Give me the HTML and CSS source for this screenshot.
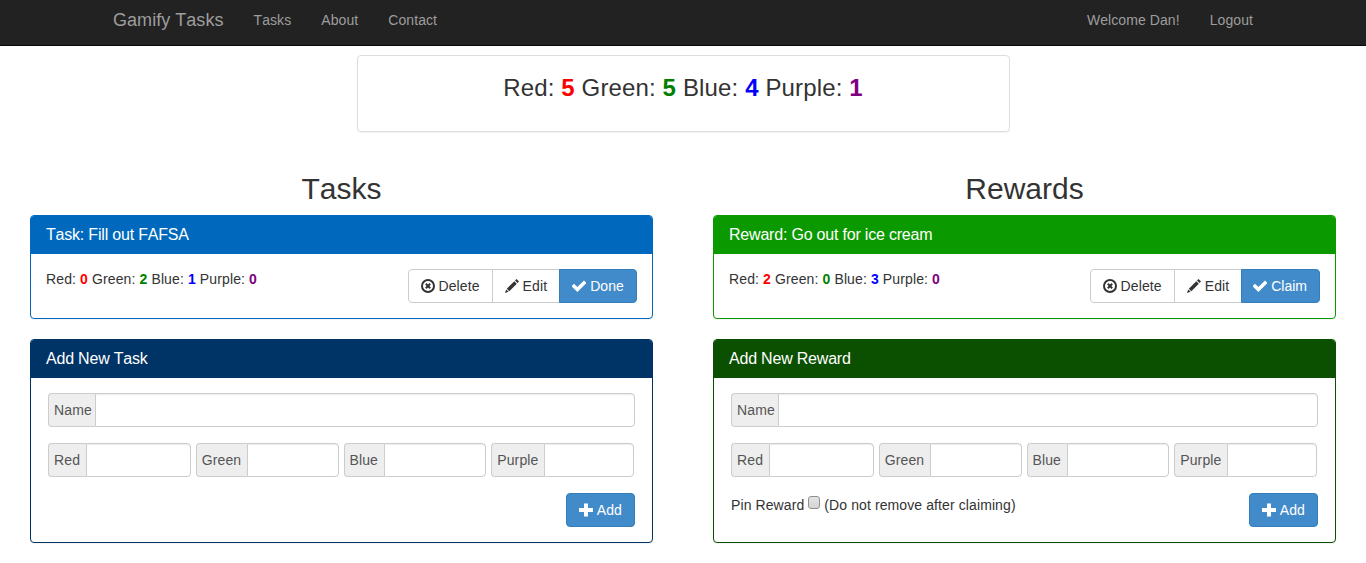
FILE: index.html
```html
<!DOCTYPE html>
<html lang="en">
<head>
<meta charset="utf-8">
<title>Gamify Tasks</title>
<link rel="stylesheet" href="styles.css">
</head>
<body>
<svg class="defs" width="0" height="0" aria-hidden="true">
  <symbol id="i-remove" viewBox="0 0 14 14"><path fill-rule="evenodd" d="M7 0a7 7 0 1 0 0 14A7 7 0 0 0 7 0zm0 2a5 5 0 1 1 0 10A5 5 0 0 1 7 2z"/><path d="M5.500 4.100 7 5.600l1.500-1.500 1.400 1.400L8.400 7l1.500 1.500-1.400 1.400L7 8.400 5.500 9.900 4.100 8.500 5.600 7 4.100 5.500z"/></symbol>
  <symbol id="i-pencil" viewBox="0 0 14 14"><path d="M11.500 0 14 2.500 12.500 4 10 1.500z"/><path d="M9.300 2.200 11.800 4.700 4.300 12.200 1.800 9.700z"/><path d="M1.200 10.400 3.600 12.800 0 14z"/></symbol>
  <symbol id="i-ok" viewBox="0 0 14 14"><path d="M12 1.500 14.500 4 5.400 13 -.5 7.200 2 4.700 5.400 8.100z"/></symbol>
  <symbol id="i-plus" viewBox="0 0 14 14"><path d="M5 .5h4V5h5v4H9v4.500H5V9H0V5h5z"/></symbol>
</svg>

<nav class="navbar">
  <div class="nav-inner">
    <a class="brand" href="#">Gamify Tasks</a>
    <a class="nav-link" href="#">Tasks</a>
    <a class="nav-link" href="#">About</a>
    <a class="nav-link" href="#">Contact</a>
    <span class="nav-spacer"></span>
    <a class="nav-link" href="#">Welcome Dan!</a>
    <a class="nav-link" href="#">Logout</a>
  </div>
</nav>

<section class="score">
  Red: <b class="red">5</b> Green: <b class="green">5</b> Blue: <b class="blue">4</b> Purple: <b class="purple">1</b>
</section>

<main class="columns">
  <div class="column">
    <h2 class="col-title">Tasks</h2>

    <article class="panel panel-task">
      <h3 class="panel-head">Task: Fill out FAFSA</h3>
      <div class="panel-body item-body">
        <p class="costs">Red: <b class="red">0</b> Green: <b class="green">2</b> Blue: <b class="blue">1</b> Purple: <b class="purple">0</b></p>
        <div class="btn-group">
          <button class="btn"><svg class="icon"><use href="#i-remove"/></svg>Delete</button>
          <button class="btn"><svg class="icon"><use href="#i-pencil"/></svg>Edit</button>
          <button class="btn btn-primary"><svg class="icon"><use href="#i-ok"/></svg>Done</button>
        </div>
      </div>
    </article>

    <article class="panel panel-add-task">
      <h3 class="panel-head">Add New Task</h3>
      <div class="panel-body form-body">
        <div class="input-group"><span class="addon addon-name">Name</span><input class="field" type="text"></div>
        <div class="input-row">
          <div class="input-group"><span class="addon">Red</span><input class="field" type="text"></div>
          <div class="input-group"><span class="addon">Green</span><input class="field" type="text"></div>
          <div class="input-group"><span class="addon">Blue</span><input class="field" type="text"></div>
          <div class="input-group"><span class="addon">Purple</span><input class="field" type="text"></div>
        </div>
        <div class="form-foot">
          <span></span>
          <button class="btn btn-primary btn-solo"><svg class="icon"><use href="#i-plus"/></svg>Add</button>
        </div>
      </div>
    </article>
  </div>

  <div class="column">
    <h2 class="col-title">Rewards</h2>

    <article class="panel panel-reward">
      <h3 class="panel-head">Reward: Go out for ice cream</h3>
      <div class="panel-body item-body">
        <p class="costs">Red: <b class="red">2</b> Green: <b class="green">0</b> Blue: <b class="blue">3</b> Purple: <b class="purple">0</b></p>
        <div class="btn-group">
          <button class="btn"><svg class="icon"><use href="#i-remove"/></svg>Delete</button>
          <button class="btn"><svg class="icon"><use href="#i-pencil"/></svg>Edit</button>
          <button class="btn btn-primary btn-claim"><svg class="icon"><use href="#i-ok"/></svg>Claim</button>
        </div>
      </div>
    </article>

    <article class="panel panel-add-reward">
      <h3 class="panel-head">Add New Reward</h3>
      <div class="panel-body form-body">
        <div class="input-group"><span class="addon addon-name">Name</span><input class="field" type="text"></div>
        <div class="input-row">
          <div class="input-group"><span class="addon">Red</span><input class="field" type="text"></div>
          <div class="input-group"><span class="addon">Green</span><input class="field" type="text"></div>
          <div class="input-group"><span class="addon">Blue</span><input class="field" type="text"></div>
          <div class="input-group"><span class="addon">Purple</span><input class="field" type="text"></div>
        </div>
        <div class="form-foot">
          <label class="pin">Pin Reward <input class="pin-check" type="checkbox"> (Do not remove after claiming)</label>
          <button class="btn btn-primary btn-solo"><svg class="icon"><use href="#i-plus"/></svg>Add</button>
        </div>
      </div>
    </article>
  </div>
</main>
</body>
</html>
```

FILE: styles.css
```css
* { box-sizing: border-box; }

html, body { margin: 0; padding: 0; }

body {
  font-family: "Liberation Sans", Arial, sans-serif;
  font-size: 14px;
  line-height: 20px;
  font-kerning: none;
  color: #333;
  background: #fff;
}

.defs { position: absolute; }

.navbar {
  height: 46px;
  background: #222;
  border-bottom: 1px solid #080808;
}

.nav-inner {
  width: 1170px;
  margin: 0 auto;
  display: flex;
}

.brand {
  padding: 10px 15px;
  font-size: 18px;
  line-height: 20px;
  letter-spacing: .04px;
  color: #9d9d9d;
  text-decoration: none;
}

.nav-link {
  padding: 10px 15px;
  line-height: 20px;
  letter-spacing: .08px;
  color: #9d9d9d;
  text-decoration: none;
}

.nav-spacer { flex: 1; }

.score {
  width: 653px;
  height: 77px;
  margin: 9px auto 0;
  padding-top: 15px;
  border: 1px solid #ddd;
  border-radius: 4px;
  box-shadow: 0 1px 1px rgba(0, 0, 0, .05);
  text-align: center;
  font-size: 24px;
  line-height: 34px;
  letter-spacing: .14px;
}

.red { color: #f00; }
.green { color: #008000; }
.blue { color: #00f; }
.purple { color: #800080; }

.columns {
  display: grid;
  grid-template-columns: 623px 623px;
  column-gap: 60px;
  padding: 0 30px;
}

.col-title {
  margin: 40px 0 10px;
  font-size: 30px;
  font-weight: 500;
  line-height: 33px;
  text-align: center;
}

.panel {
  margin-bottom: 20px;
  border: 1px solid;
  border-radius: 4px;
  box-shadow: 0 1px 1px rgba(0, 0, 0, .05);
  background: #fff;
}

.panel-head {
  margin: 0;
  padding: 10px 15px;
  font-size: 16px;
  font-weight: 400;
  line-height: 18px;
  letter-spacing: -.2px;
  color: #fff;
  border-radius: 3px 3px 0 0;
}

.panel-task { border-color: #0069bd; }
.panel-task .panel-head { background: #0069bd; }
.panel-add-task { border-color: #003366; }
.panel-add-task .panel-head { background: #003366; }
.panel-reward { border-color: #0b9900; }
.panel-reward .panel-head { background: #0b9900; }
.panel-add-reward { border-color: #0a5000; }
.panel-add-reward .panel-head { background: #0a5000; }

.panel-body { padding: 15px; }

.item-body {
  display: flex;
  justify-content: space-between;
  align-items: flex-start;
}

.costs { margin: 0; letter-spacing: .12px; }

.btn-group { display: flex; }

.btn {
  display: inline-flex;
  align-items: center;
  height: 34px;
  margin: 0;
  padding: 0 12px;
  border: 1px solid #ccc;
  background: #fff;
  color: #333;
  font: inherit;
  letter-spacing: .1px;
}

.btn-group .btn + .btn { margin-left: -1px; }
.btn-group .btn:first-child { border-radius: 4px 0 0 4px; }
.btn-group .btn:last-child { border-radius: 0 4px 4px 0; }

.btn-primary {
  background: #428bca;
  border-color: #357ebd;
  color: #fff;
}

.btn-claim { padding-left: 11px; letter-spacing: 0; }

.btn-solo { border-radius: 4px; }

.icon {
  width: 14px;
  height: 14px;
  margin-right: 4px;
  overflow: visible;
  fill: currentColor;
}

.form-body { padding: 15px 17px; }

.input-group {
  display: flex;
  height: 34px;
  min-width: 0;
}

.addon {
  padding: 6px 5.500px 6px 5px;
  border: 1px solid #ccc;
  border-right: 0;
  border-radius: 4px 0 0 4px;
  background: #eee;
  color: #555;
  letter-spacing: .12px;
}

.addon-name { padding-right: 3.500px; }

.field {
  flex: 1;
  width: 100%;
  min-width: 0;
  padding: 6px 12px;
  border: 1px solid #ccc;
  border-radius: 0 4px 4px 0;
  box-shadow: inset 0 1px 1px rgba(0, 0, 0, .075);
  background: #fff;
  font: inherit;
  color: #555;
}

.input-row {
  display: grid;
  grid-template-columns: repeat(4, minmax(0, 1fr));
  column-gap: 5px;
  margin: 16px 1px 0 0;
}

.form-foot {
  display: flex;
  justify-content: space-between;
  align-items: flex-start;
  margin-top: 16px;
}

.pin {
  display: block;
  margin-top: 2px;
  letter-spacing: .1px;
}

.pin-check {
  appearance: none;
  width: 12px;
  height: 13px;
  margin: 0;
  vertical-align: 1px;
  border: 1px solid #8f8f8f;
  border-radius: 3px;
  background: linear-gradient(#e4e4e4, #d4d4d4);
}
```
